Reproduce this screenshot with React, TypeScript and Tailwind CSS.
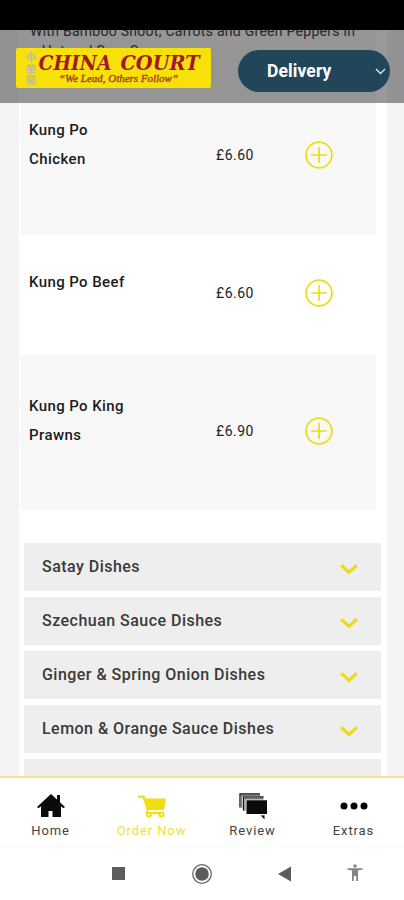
import React, { useState } from "react";

// types
type Dish = {
  name: string;
  price: string;
  rowClass: string;
  actionClass: string;
};

const dishes: Dish[] = [
  {
    name: "Kung Po Chicken",
    price: "£6.60",
    rowClass: "h-[154px] bg-[#f8f8f8] pt-[35px]",
    actionClass: "mt-[25px]",
  },
  {
    name: "Kung Po Beef",
    price: "£6.60",
    rowClass: "h-[120px] bg-white pt-[33px]",
    actionClass: "mt-[11px]",
  },
  {
    name: "Kung Po King Prawns",
    price: "£6.90",
    rowClass: "h-[155px] bg-[#f8f8f8] pt-[37px]",
    actionClass: "mt-[25px]",
  },
];

const categories = [
  "Satay Dishes",
  "Szechuan Sauce Dishes",
  "Ginger & Spring Onion Dishes",
  "Lemon & Orange Sauce Dishes",
];

const Logo = () => (
  <svg width="195" height="40" viewBox="0 0 195 40" className="shrink-0">
    <rect width="195" height="40" rx="2" fill="#f7e108" />
    <g
      fill="#c4bd92"
      fontFamily="'Noto Sans CJK TC', sans-serif"
      fontSize="10"
      fontWeight="bold"
    >
      <text x="10" y="13">中</text>
      <text x="10" y="24.5">華</text>
      <text x="10" y="36">閣</text>
    </g>
    <g
      fill="#a3162c"
      fontFamily="'DejaVu Serif', serif"
      fontSize="19.5"
      fontWeight="bold"
      fontStyle="italic"
    >
      <text x="22.500" y="21.500" textLength="73" lengthAdjust="spacingAndGlyphs">
        CHINA
      </text>
      <text x="104.500" y="21.500" textLength="79" lengthAdjust="spacingAndGlyphs">
        COURT
      </text>
    </g>
    <text
      x="43"
      y="33.5"
      textLength="119"
      lengthAdjust="spacingAndGlyphs"
      fill="#a8452a"
      stroke="#a8452a"
      strokeWidth="0.4"
      fontFamily="'Liberation Serif', serif"
      fontSize="10.5"
      fontStyle="italic"
    >
      “We Lead, Others Follow”
    </text>
  </svg>
);

const PlusIcon = () => (
  <svg width="28" height="28" viewBox="0 0 28 28" fill="none" stroke="#eddc1c">
    <circle cx="14" cy="14" r="12.9" strokeWidth="1.8" />
    <path d="M14 6v16M6 14h16" strokeWidth="1.7" />
  </svg>
);

const Chevron = () => (
  <svg width="18" height="12" viewBox="0 0 18 12" fill="none">
    <path d="M1.2 2.200 9 9.400 16.800 2.200" stroke="#ecdb1d" strokeWidth="3.200" />
  </svg>
);

const HomeIcon = () => (
  <svg width="28" height="24" viewBox="0 0 28 24" fill="#0b0b0b">
    <path d="M14 0 0 13l1.500 1.300L4 12.200V23h7.500v-6h4v6H24V12.200l2.500 2.100L28 13l-5-4.700V1h-3v4.500z" />
  </svg>
);

const CartIcon = () => (
  <svg width="28" height="23" viewBox="0 0 28 23" fill="#f2de0c">
    <path d="M0 .500h6.200l1.600 3H28l-2 11.500H10.300l-.6 2h15.800v2.200H7.500L8.400 14 4.700 2.700H0z" />
    <circle cx="10.800" cy="19.500" r="3" />
    <circle cx="23.500" cy="19.500" r="3" />
    <circle cx="10.800" cy="19.500" r="1" fill="#fff" />
    <circle cx="23.500" cy="19.500" r="1" fill="#fff" />
  </svg>
);

const ReviewIcon = () => (
  <svg width="28" height="27" viewBox="0 0 28 27" fill="none">
    <path d="M1 14.500V1h20M4.500 17.500V4h20" stroke="#111" strokeWidth="1.300" />
    <path d="M2 2.500h19M5.500 5.500h19" stroke="#777" strokeWidth="1.800" />
    <path d="M2.500 3v12M6 6v12" stroke="#888" strokeWidth="1.300" />
    <path d="M7.500 7.200H28V21h-2.500v5.500L20.500 21h-13z" fill="#0b0b0b" />
    <path d="M20 21.700h6" stroke="#fff" strokeWidth="1.400" />
  </svg>
);

const DotsIcon = () => (
  <svg width="28" height="8" viewBox="0 0 28 8" fill="#050505">
    <circle cx="4" cy="4" r="3.500" />
    <circle cx="14" cy="4" r="3.500" />
    <circle cx="24" cy="4" r="3.500" />
  </svg>
);

const tabs = [
  { label: "Home", icon: <HomeIcon /> },
  { label: "Order Now", icon: <CartIcon /> },
  { label: "Review", icon: <ReviewIcon /> },
  { label: "Extras", icon: <DotsIcon /> },
];

const App = () => {
  // ** states
  const [activeTab, setActiveTab] = useState<string>("Order Now");

  return (
    <div className="flex h-[900px] w-[404px] flex-col overflow-hidden bg-white font-['Roboto',sans-serif]">
      {/* status bar */}
      <div className="h-[30px] shrink-0 bg-black" />

      <main className="relative h-[746px] shrink-0 overflow-hidden bg-[#f4f4f7]">
        {/* header, floats over the menu */}
        <header className="absolute inset-x-0 top-0 flex h-[73px] justify-between bg-black/40 pr-3.5 pl-4">
          <div className="pt-[18px]">
            <Logo />
          </div>
          <button className="mt-5 flex h-[42px] w-[152px] items-center justify-between rounded-full bg-[#21465a] pr-1 pl-[29px] text-white">
            <span className="pt-px text-[17.5px] font-bold tracking-[0.1px]">
              Delivery
            </span>
            <svg width="11" height="7" viewBox="0 0 11 7" fill="none">
              <path d="m1 1 4.500 4.500L10 1" stroke="#dbe6ec" strokeWidth="1.400" />
            </svg>
          </button>
        </header>

        <div className="mr-[17px] ml-[19px] flex h-full flex-col bg-white">
          <div className="mr-[11px] ml-px flex shrink-0 flex-col">
            <p className="-mt-[9px] h-[60px] bg-[#f8f8f8] pl-2.5 text-[14px] leading-5 tracking-[0.27px] whitespace-nowrap text-[#444]">
              With Bamboo Shoot, Carrots and Green Peppers in
              <br />a Hot and Sour Sauce
            </p>

            {dishes.map((dish) => (
              <div
                key={dish.name}
                className={`flex shrink-0 items-start ${dish.rowClass}`}
              >
                <h3 className="w-[110px] pl-[9px] text-[15px] leading-[29px] font-medium tracking-[0.4px] text-[#1c1c1c]">
                  {dish.name}
                </h3>
                <div className={`ml-[86px] flex ${dish.actionClass}`}>
                  <span className="w-[89px] text-[14px] leading-[29px] tracking-[0.5px] text-[#222]">
                    {dish.price}
                  </span>
                  <button className="h-7">
                    <PlusIcon />
                  </button>
                </div>
              </div>
            ))}
          </div>

          {/* categories */}
          <div className="mt-[33px] mr-1.5 ml-[5px] flex shrink-0 flex-col gap-1.5">
            {categories.map((category) => (
              <button
                key={category}
                className="flex h-12 items-center justify-between bg-[#eeeeee] pr-[23px] pl-[18px] text-left"
              >
                <span className="text-[16px] font-medium tracking-[0.47px] text-[#3a3a3a]">
                  {category}
                </span>
                <span className="pt-1">
                  <Chevron />
                </span>
              </button>
            ))}
            <div className="h-12 bg-[#eeeeee]" />
          </div>
        </div>
      </main>

      {/* tabs */}
      <nav className="flex h-[71px] shrink-0 border-t-2 border-[#f3e58f] border-b border-b-[#f8f8f8]">
        {tabs.map((tab) => (
          <button
            key={tab.label}
            onClick={() => setActiveTab(tab.label)}
            className={
              tab.label === activeTab
                ? "flex w-[101px] flex-col items-center pt-3 text-[#eedf3c]"
                : "flex w-[101px] flex-col items-center pt-3 text-[#444]"
            }
          >
            <span className="flex h-8 items-center">{tab.icon}</span>
            <span className="pt-px text-[13px] leading-4 tracking-[0.9px] whitespace-nowrap">
              {tab.label}
            </span>
          </button>
        ))}
      </nav>

      {/* system buttons */}
      <div className="flex grow items-center pl-28">
        <svg width="252" height="22" viewBox="0 0 252 22" fill="#5c5c5c">
          <rect x="0" y="4" width="13" height="13" />
          <circle cx="90" cy="11" r="9.300" fill="none" stroke="#666" strokeWidth="1.300" />
          <circle cx="90" cy="11" r="6.800" />
          <path d="M166 11 179 3.500v15z" />
          <g fill="#858585">
            <circle cx="243" cy="3" r="1.800" />
            <path d="M235.500 5.200h15v1.600l-4.500.8V18h-1.800v-5h-2.400v5H240V7.600l-4.500-.8z" />
          </g>
        </svg>
      </div>
    </div>
  );
};

export default App;
